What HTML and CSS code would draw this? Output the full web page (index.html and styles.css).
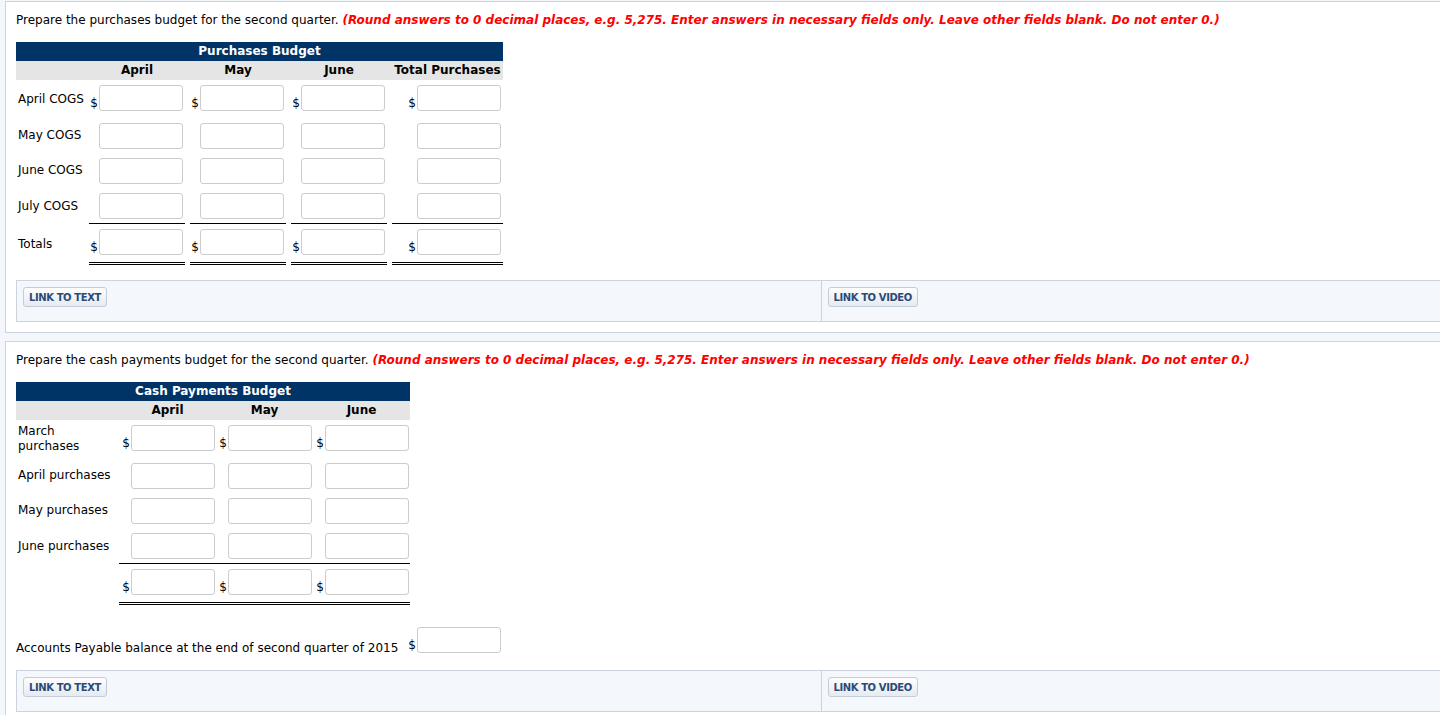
FILE: index.html
```html
<!DOCTYPE html>
<html lang="en">
<head>
    <meta charset="UTF-8">
    <title>Budgets - Second Quarter</title>
    <link rel="stylesheet" href="styles.css">
</head>
<body>
    <div class="question">
        <p class="prompt">Prepare the purchases budget for the second quarter. <em class="hint">(Round answers to 0 decimal places, e.g. 5,275. Enter answers in necessary fields only. Leave other fields blank. Do not enter 0.)</em></p>

        <table class="budget budget-purchases">
            <colgroup>
                <col class="col-label">
                <col class="col-amount">
                <col class="col-amount">
                <col class="col-amount">
                <col class="col-total">
            </colgroup>
            <thead>
                <tr class="title-row"><th colspan="5">Purchases Budget</th></tr>
                <tr class="col-row"><th></th><th>April</th><th>May</th><th>June</th><th>Total Purchases</th></tr>
            </thead>
            <tbody>
                <tr class="first">
                    <td class="label">April COGS</td>
                    <td class="amount"><div class="cell"><span class="cur">$</span><input class="field" type="text"></div></td>
                    <td class="amount"><div class="cell"><span class="cur">$</span><input class="field" type="text"></div></td>
                    <td class="amount"><div class="cell"><span class="cur">$</span><input class="field" type="text"></div></td>
                    <td class="amount"><div class="cell"><span class="cur">$</span><input class="field" type="text"></div></td>
                </tr>
                <tr>
                    <td class="label">May COGS</td>
                    <td class="amount"><div class="cell"><input class="field" type="text"></div></td>
                    <td class="amount"><div class="cell"><input class="field" type="text"></div></td>
                    <td class="amount"><div class="cell"><input class="field" type="text"></div></td>
                    <td class="amount"><div class="cell"><input class="field" type="text"></div></td>
                </tr>
                <tr>
                    <td class="label">June COGS</td>
                    <td class="amount"><div class="cell"><input class="field" type="text"></div></td>
                    <td class="amount"><div class="cell"><input class="field" type="text"></div></td>
                    <td class="amount"><div class="cell"><input class="field" type="text"></div></td>
                    <td class="amount"><div class="cell"><input class="field" type="text"></div></td>
                </tr>
                <tr class="subtotal">
                    <td class="label">July COGS</td>
                    <td class="amount"><div class="cell"><input class="field" type="text"></div></td>
                    <td class="amount"><div class="cell"><input class="field" type="text"></div></td>
                    <td class="amount"><div class="cell"><input class="field" type="text"></div></td>
                    <td class="amount"><div class="cell"><input class="field" type="text"></div></td>
                </tr>
                <tr class="total">
                    <td class="label">Totals</td>
                    <td class="amount"><div class="cell"><span class="cur">$</span><input class="field" type="text"></div></td>
                    <td class="amount"><div class="cell"><span class="cur">$</span><input class="field" type="text"></div></td>
                    <td class="amount"><div class="cell"><span class="cur">$</span><input class="field" type="text"></div></td>
                    <td class="amount"><div class="cell"><span class="cur">$</span><input class="field" type="text"></div></td>
                </tr>
            </tbody>
        </table>

        <div class="links">
            <div class="link-cell"><button class="link-button" type="button">LINK TO TEXT</button></div>
            <div class="link-cell"><button class="link-button" type="button">LINK TO VIDEO</button></div>
        </div>
    </div>

    <div class="question">
        <p class="prompt">Prepare the cash payments budget for the second quarter. <em class="hint">(Round answers to 0 decimal places, e.g. 5,275. Enter answers in necessary fields only. Leave other fields blank. Do not enter 0.)</em></p>

        <table class="budget budget-cash">
            <colgroup>
                <col class="col-label">
                <col class="col-amount">
                <col class="col-amount">
                <col class="col-amount">
            </colgroup>
            <thead>
                <tr class="title-row"><th colspan="4">Cash Payments Budget</th></tr>
                <tr class="col-row"><th></th><th>April</th><th>May</th><th>June</th></tr>
            </thead>
            <tbody>
                <tr class="first">
                    <td class="label">March<br>purchases</td>
                    <td class="amount"><div class="cell"><span class="cur">$</span><input class="field" type="text"></div></td>
                    <td class="amount"><div class="cell"><span class="cur">$</span><input class="field" type="text"></div></td>
                    <td class="amount"><div class="cell"><span class="cur">$</span><input class="field" type="text"></div></td>
                </tr>
                <tr>
                    <td class="label">April purchases</td>
                    <td class="amount"><div class="cell"><input class="field" type="text"></div></td>
                    <td class="amount"><div class="cell"><input class="field" type="text"></div></td>
                    <td class="amount"><div class="cell"><input class="field" type="text"></div></td>
                </tr>
                <tr>
                    <td class="label">May purchases</td>
                    <td class="amount"><div class="cell"><input class="field" type="text"></div></td>
                    <td class="amount"><div class="cell"><input class="field" type="text"></div></td>
                    <td class="amount"><div class="cell"><input class="field" type="text"></div></td>
                </tr>
                <tr class="subtotal">
                    <td class="label">June purchases</td>
                    <td class="amount"><div class="cell"><input class="field" type="text"></div></td>
                    <td class="amount"><div class="cell"><input class="field" type="text"></div></td>
                    <td class="amount"><div class="cell"><input class="field" type="text"></div></td>
                </tr>
                <tr class="total">
                    <td class="label"></td>
                    <td class="amount"><div class="cell"><span class="cur">$</span><input class="field" type="text"></div></td>
                    <td class="amount"><div class="cell"><span class="cur">$</span><input class="field" type="text"></div></td>
                    <td class="amount"><div class="cell"><span class="cur">$</span><input class="field" type="text"></div></td>
                </tr>
            </tbody>
        </table>

        <div class="balance-line">
            <span class="balance-label">Accounts Payable balance at the end of second quarter of 2015</span>
            <span class="cur">$</span><input class="field" type="text">
        </div>

        <div class="links">
            <div class="link-cell"><button class="link-button" type="button">LINK TO TEXT</button></div>
            <div class="link-cell"><button class="link-button" type="button">LINK TO VIDEO</button></div>
        </div>
    </div>
</body>
</html>
```

FILE: styles.css
```css
:root {
    --navy: #003366;
    --line-color: #ccd3de;
    --strip-bg: #f4f7fb;
    --page-bg: #f3f6fa;
    --hint-red: #ff0000;
}

html {
    overflow: hidden;
}

body {
    margin: 1px 0 0 5px;
    background-color: var(--page-bg);
    font-family: "DejaVu Sans", Verdana, sans-serif;
    font-size: 12px;
    color: #000;
}

.question {
    width: 1632px;
    box-sizing: border-box;
    background-color: #fff;
    border: 1px solid var(--line-color);
    padding: 10px 10px 10px;
    margin-bottom: 8px;
}

.prompt {
    margin: 0 0 14px;
    line-height: 16px;
}

.hint {
    color: var(--hint-red);
    font-weight: bold;
    font-style: italic;
}

/* Budget tables */
.budget {
    border-collapse: collapse;
    table-layout: fixed;
}

.budget th,
.budget td {
    padding: 0;
}

.budget .title-row th {
    background-color: var(--navy);
    color: #fff;
    height: 19px;
    line-height: 19px;
    font-weight: bold;
    text-align: center;
}

.budget .col-row th {
    background-color: #e5e5e5;
    height: 19px;
    line-height: 19px;
    font-weight: bold;
    text-align: center;
}

.budget-purchases .col-label { width: 67px; }
.budget-purchases .col-amount { width: 101px; }
.budget-purchases .col-total { width: 116px; }

.budget-cash .col-label { width: 103px; }
.budget-cash .col-amount { width: 97px; }

.budget-purchases .col-row th + th,
.budget-purchases td.amount {
    padding-left: 5px;
}

.budget td.label {
    vertical-align: middle;
    white-space: nowrap;
    padding-left: 2px;
    line-height: 15px;
}

.budget td.amount {
    vertical-align: top;
    padding-top: 5px;
    padding-bottom: 4px;
}

.budget tr.first td.amount {
    padding-bottom: 7px;
}

.budget tr.subtotal td.amount,
.budget tr.total td.amount {
    padding-bottom: 0;
}

.cell {
    display: flex;
    justify-content: flex-end;
    align-items: flex-end;
    padding-right: 2px;
}

.budget-cash .cell {
    padding-right: 1px;
}

.subtotal .cell {
    border-bottom: 1px solid #000;
    padding-bottom: 4px;
}

.total .cell {
    border-bottom: 3px double #000;
    padding-bottom: 7px;
}

.cur {
    line-height: 13px;
    margin-right: 1px;
    margin-bottom: 1px;
}

.field {
    width: 84px;
    height: 26px;
    box-sizing: border-box;
    margin: 0;
    padding: 0 4px;
    border: 1px solid #cccccc;
    border-radius: 3px;
    background-color: #fff;
    font-family: inherit;
    font-size: 12px;
}

/* Single answer line */
.balance-line {
    display: flex;
    align-items: flex-end;
    margin-top: 22px;
}

.balance-label {
    line-height: 15px;
    margin-right: 10px;
    margin-bottom: -3px;
}

/* Link strip */
.links {
    display: flex;
    margin-top: 15px;
    border: 1px solid var(--line-color);
    background-color: var(--strip-bg);
}

.balance-line + .links {
    margin-top: 17px;
}

.link-cell {
    flex: 1;
    height: 40px;
    box-sizing: border-box;
    padding: 6px;
}

.link-cell + .link-cell {
    border-left: 1px solid var(--line-color);
}

.link-button {
    height: 20px;
    padding: 0 5px;
    border: 1px solid #c3ccd8;
    border-radius: 3px;
    background: linear-gradient(#fdfdfe, #e6ebf1);
    color: #2a4b78;
    font-family: "DejaVu Sans", Verdana, sans-serif;
    font-size: 10px;
    font-weight: bold;
    letter-spacing: -0.4px;
    cursor: pointer;
}
```
